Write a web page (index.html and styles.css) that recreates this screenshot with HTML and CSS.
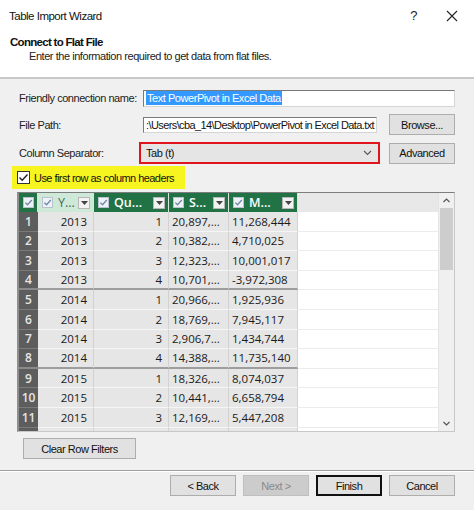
FILE: index.html
```html
<!DOCTYPE html>
<html>
<head>
<meta charset="utf-8">
<link rel="stylesheet" href="styles.css">
</head>
<body>
<div class="win">
  <div class="titlebar">
    <span class="title">Table Import Wizard</span>
    <span class="help">?</span>
    <svg class="close" width="12" height="12" viewBox="0 0 12 12"><path d="M1 1L11 11M11 1L1 11" stroke="#222" stroke-width="1.1" fill="none"/></svg>
  </div>
  <div class="head">
    <div class="h1">Connect to Flat File</div>
    <div class="h2">Enter the information required to get data from flat files.</div>
  </div>
  <div class="body">
    <div class="row r1">
      <span class="lbl">Friendly connection name:</span>
      <div class="input wide"><span class="sel">Text PowerPivot in Excel Data</span></div>
    </div>
    <div class="row r2">
      <span class="lbl">File Path:</span>
      <div class="input path">:\Users\cba_14\Desktop\PowerPivot in Excel Data.txt</div>
      <div class="btn side">Browse...</div>
    </div>
    <div class="row r3">
      <span class="lbl">Column Separator:</span>
      <div class="select"><span>Tab (t)</span><svg width="9" height="6" viewBox="0 0 9 6"><path d="M1 1L4.5 4.5L8 1" stroke="#555" stroke-width="1.1" fill="none"/></svg></div>
      <div class="btn side adv">Advanced</div>
    </div>
    <div class="chkrow">
      <svg class="cb" width="13" height="13" viewBox="0 0 13 13"><rect x="0.5" y="0.5" width="12" height="12" fill="#fff" stroke="#333"/><path d="M2.5 6.5L5.2 9.2L10.5 3.5" stroke="#222" stroke-width="1.4" fill="none"/></svg>
      <span>Use first row as column headers</span>
    </div>
    <div class="grid">
      <div class="table">
        <div class="tr hdr">
          <div class="hc corner"><svg class="hcb" width="11" height="11" viewBox="0 0 11 11"><rect x="0.5" y="0.5" width="10" height="10" fill="#eef2f6" stroke="#b9c3cf"/><path d="M2.3 5.6L4.5 7.8L8.8 3" stroke="#6f86a8" stroke-width="1.3" fill="none"/></svg></div>
          <div class="hc sel-h"><svg class="hcb" width="11" height="11" viewBox="0 0 11 11"><rect x="0.5" y="0.5" width="10" height="10" fill="#eef2f6" stroke="#b9c3cf"/><path d="M2.3 5.6L4.5 7.8L8.8 3" stroke="#6f86a8" stroke-width="1.3" fill="none"/></svg><span class="ht">Y...</span><span class="dd"><svg width="7" height="4" viewBox="0 0 7 4"><path d="M0 0H7L3.5 4Z" fill="#444"/></svg></span></div>
          <div class="hc"><svg class="hcb" width="11" height="11" viewBox="0 0 11 11"><rect x="0.5" y="0.5" width="10" height="10" fill="#eef2f6" stroke="#b9c3cf"/><path d="M2.3 5.6L4.5 7.8L8.8 3" stroke="#6f86a8" stroke-width="1.3" fill="none"/></svg><span class="ht">Qu...</span><span class="dd"><svg width="7" height="4" viewBox="0 0 7 4"><path d="M0 0H7L3.5 4Z" fill="#444"/></svg></span></div>
          <div class="hc"><svg class="hcb" width="11" height="11" viewBox="0 0 11 11"><rect x="0.5" y="0.5" width="10" height="10" fill="#eef2f6" stroke="#b9c3cf"/><path d="M2.3 5.6L4.5 7.8L8.8 3" stroke="#6f86a8" stroke-width="1.3" fill="none"/></svg><span class="ht">S...</span><span class="dd"><svg width="7" height="4" viewBox="0 0 7 4"><path d="M0 0H7L3.5 4Z" fill="#444"/></svg></span></div>
          <div class="hc"><svg class="hcb" width="11" height="11" viewBox="0 0 11 11"><rect x="0.5" y="0.5" width="10" height="10" fill="#eef2f6" stroke="#b9c3cf"/><path d="M2.3 5.6L4.5 7.8L8.8 3" stroke="#6f86a8" stroke-width="1.3" fill="none"/></svg><span class="ht">M...</span><span class="dd"><svg width="7" height="4" viewBox="0 0 7 4"><path d="M0 0H7L3.5 4Z" fill="#444"/></svg></span></div>
          <div class="hc empty"></div>
        </div>
        <div class="tr"><div class="rn">1</div><div class="c r">2013</div><div class="c r">1</div><div class="c">20,897,...</div><div class="c">11,268,444</div><div class="e"></div></div>
        <div class="tr"><div class="rn">2</div><div class="c r">2013</div><div class="c r">2</div><div class="c">10,382,...</div><div class="c">4,710,025</div><div class="e"></div></div>
        <div class="tr"><div class="rn">3</div><div class="c r">2013</div><div class="c r">3</div><div class="c">12,323,...</div><div class="c">10,001,017</div><div class="e"></div></div>
        <div class="tr grp"><div class="rn">4</div><div class="c r">2013</div><div class="c r">4</div><div class="c">10,701,...</div><div class="c">-3,972,308</div><div class="e"></div></div>
        <div class="tr"><div class="rn">5</div><div class="c r">2014</div><div class="c r">1</div><div class="c">20,966,...</div><div class="c">1,925,936</div><div class="e"></div></div>
        <div class="tr"><div class="rn">6</div><div class="c r">2014</div><div class="c r">2</div><div class="c">18,769,...</div><div class="c">7,945,117</div><div class="e"></div></div>
        <div class="tr"><div class="rn">7</div><div class="c r">2014</div><div class="c r">3</div><div class="c">2,906,7...</div><div class="c">1,434,744</div><div class="e"></div></div>
        <div class="tr grp"><div class="rn">8</div><div class="c r">2014</div><div class="c r">4</div><div class="c">14,388,...</div><div class="c">11,735,140</div><div class="e"></div></div>
        <div class="tr"><div class="rn">9</div><div class="c r">2015</div><div class="c r">1</div><div class="c">18,326,...</div><div class="c">8,074,037</div><div class="e"></div></div>
        <div class="tr"><div class="rn">10</div><div class="c r">2015</div><div class="c r">2</div><div class="c">10,441,...</div><div class="c">6,658,794</div><div class="e"></div></div>
        <div class="tr"><div class="rn">11</div><div class="c r">2015</div><div class="c r">3</div><div class="c">12,169,...</div><div class="c">5,447,208</div><div class="e"></div></div>
        <div class="tr"><div class="rn"></div><div class="c r"></div><div class="c r"></div><div class="c"></div><div class="c"></div><div class="e"></div></div>
      </div>
      <div class="scroll">
        <svg class="arr" width="15" height="14" viewBox="0 0 15 14"><path d="M4.5 9L7.5 6L10.5 9" stroke="#555" stroke-width="1.2" fill="none"/></svg>
        <div class="track"><div class="thumb"></div></div>
        <svg class="arr" width="15" height="14" viewBox="0 0 15 14"><path d="M4.5 5L7.5 8L10.5 5" stroke="#555" stroke-width="1.2" fill="none"/></svg>
      </div>
    </div>
    <div class="btn clear">Clear Row Filters</div>
  </div>
  <div class="footer">
    <div class="btn fb">&lt; Back</div>
    <div class="btn fb dis">Next &gt;</div>
    <div class="btn fb def">Finish</div>
    <div class="btn fb">Cancel</div>
  </div>
</div>
</body>
</html>
```

FILE: styles.css
```css
html, body {
  margin: 0;
  padding: 0;
}
body {
  width: 474px;
  height: 510px;
  overflow: hidden;
  background: #f0f0f0;
  font-family: "Liberation Sans", Arial, sans-serif;
  font-size: 11px;
  letter-spacing: -0.45px;
  color: #111;
  white-space: nowrap;
}
.win {
  width: 474px;
  height: 510px;
  display: flex;
  flex-direction: column;
}
.titlebar {
  height: 30px;
  background: #fff;
  display: flex;
  align-items: center;
  padding-left: 9px;
  box-sizing: border-box;
  padding-top: 1px;
}
.title {
  font-size: 11.5px;
  letter-spacing: -0.5px;
  flex: 1;
  color: #111;
}
.help {
  font-size: 13px;
  margin-right: 29px;
  color: #222;
}
.close {
  margin-right: 16px;
}
.head {
  background: #fff;
  height: 49px;
  box-sizing: border-box;
  border-bottom: 2px solid #c8c8c8;
  padding-top: 6px;
}
.h1 {
  font-weight: bold;
  font-size: 11.5px;
  padding-left: 10px;
  height: 13px;
  line-height: 13px;
  letter-spacing: -0.7px;
}
.h2 {
  padding-left: 29px;
  font-size: 11px;
  margin-top: 1px;
  line-height: 13px;
  color: #222;
}
.body {
  flex: 1;
  padding-top: 10px;
  box-sizing: border-box;
}
.row {
  display: flex;
  align-items: center;
  padding-left: 19px;
}
.lbl {
  width: 124px;
  flex: none;
  color: #222;
}
.input {
  background: #fff;
  border: 1px solid #7a7a7a;
  border-color: #7a7a7a #d5d5d5 #d5d5d5 #7a7a7a;
  height: 16px;
  box-sizing: border-box;
  display: flex;
  align-items: center;
  padding-left: 2px;
  overflow: hidden;
  color: #111;
}
.r1 {
  height: 18px;
}
.input.wide {
  width: 312px;
  height: 17px;
}
.sel {
  background: #3399ff;
  color: #fff;
  padding: 1px 1px;
  line-height: 12px;
}
.r2 {
  margin-top: 7px;
  height: 21px;
}
.input.path {
  width: 234px;
  height: 16px;
  letter-spacing: -0.6px;
}
.btn {
  background: #e1e1e1;
  border: 1px solid #adadad;
  box-sizing: border-box;
  height: 21px;
  display: flex;
  align-items: center;
  justify-content: center;
  color: #111;
  flex: none;
}
.btn.side {
  width: 66px;
  margin-left: 12px;
}
.r3 {
  margin-top: 7px;
  height: 22px;
}
.r3 .lbl {
  width: 120px;
}
.select {
  width: 241px;
  height: 22px;
  box-sizing: border-box;
  border: 2px solid #e0141c;
  background: #e5e5e5;
  display: flex;
  align-items: center;
  justify-content: space-between;
  padding: 0 6px 0 5px;
}
.btn.adv {
  margin-left: 9px;
}
.chkrow {
  margin: 2px 0 0 12px;
  width: 173px;
  height: 23px;
  background: #f7f51f;
  display: flex;
  align-items: center;
  padding-left: 5px;
  box-sizing: border-box;
  color: #111;
  letter-spacing: -0.55px;
}
.cb {
  margin-right: 4px;
  flex: none;
}
.grid {
  margin: 3px 19px 0 17px;
  height: 240px;
  display: flex;
  border-top: 1px solid #7d7d7d;
  border-left: 2px solid #8e8e8e;
  border-right: 1px solid #c8c8c8;
  border-bottom: 1px solid #c8c8c8;
  background: #fff;
  box-sizing: border-box;
  font-family: "Open Sans", "Liberation Sans", sans-serif;
  letter-spacing: 0;
}
.table {
  flex: 1;
  overflow: hidden;
}
.tr {
  display: grid;
  grid-template-columns: 19px 56px 75px 60px 69px 1fr;
  height: 19.6px;
}
.tr.hdr {
  height: 19px;
}
.hc {
  background: #217346;
  border-right: 1px solid #d5e7dc;
  display: flex;
  align-items: center;
  padding: 0 3px 0 4px;
  gap: 5px;
  color: #fff;
  font-size: 12.5px;
  font-weight: 600;
  min-width: 0;
  overflow: hidden;
  box-sizing: border-box;
}
.hc.corner {
  padding: 0 0 0 4px;
}
.hc.sel-h {
  background: #cfe9d9;
  color: #3e6b58;
  font-weight: 400;
}
.hc.empty {
  background: #e8e8e8;
  border-right: none;
}
.hcb {
  flex: none;
}
.ht {
  flex: 1;
  min-width: 0;
}
.dd {
  width: 12px;
  height: 12px;
  background: #f2f2f2;
  border: 1px solid #b7b7b7;
  box-sizing: border-box;
  display: flex;
  align-items: center;
  justify-content: center;
  flex: none;
}
.rn {
  background: #5d5d5d;
  color: #e6e6e6;
  font-size: 12px;
  display: flex;
  align-items: center;
  justify-content: center;
  border-bottom: 1px solid #7a7a7a;
  box-sizing: border-box;
  font-weight: 600;
}
.c {
  background: #e6e6e6;
  border-right: 1px solid #d2d2d2;
  border-bottom: 1px solid #f6f6f6;
  box-sizing: border-box;
  display: flex;
  align-items: center;
  padding: 0 4px 0 3px;
  font-size: 11.5px;
  color: #1a1a1a;
  overflow: hidden;
}
.c.r {
  justify-content: flex-end;
  padding-right: 6px;
}
.e {
  background: #fff;
  border-bottom: 1px solid #ececec;
  box-sizing: border-box;
}
.tr.grp .c {
  border-bottom: 2px solid #9d9d9d;
}
.tr.grp .rn {
  border-bottom: 2px solid #8a8a8a;
}
.scroll {
  width: 15px;
  background: #f0f0f0;
  display: flex;
  flex-direction: column;
  border-left: 1px solid #e4e4e4;
}
.arr {
  flex: none;
}
.track {
  flex: 1;
}
.thumb {
  margin: 1px 1px 0 1px;
  height: 62px;
  background: #cdcdcd;
}
.clear {
  width: 113px;
  margin: 6px 0 0 23px;
}
.footer {
  height: 40px;
  border-top: 1px solid #a0a0a0;
  box-shadow: inset 0 1px 0 #fff;
  display: flex;
  justify-content: flex-end;
  padding: 4px 19px 0 0;
  gap: 7px;
  box-sizing: border-box;
}
.btn.fb {
  width: 66px;
}
.btn.dis {
  background: #cccccc;
  border-color: #bfbfbf;
  color: #8a8a8a;
}
.btn.def {
  border: 2px solid #111;
}
```
